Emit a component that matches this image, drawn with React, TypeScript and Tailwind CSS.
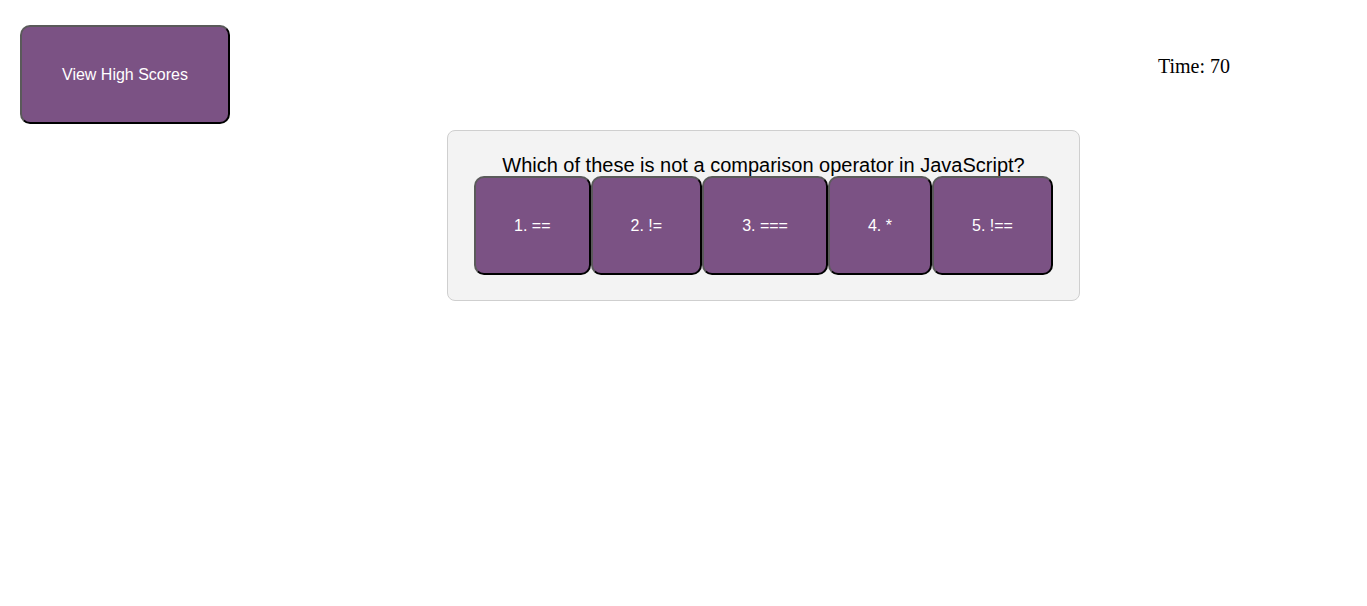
const choices = ["1. ==", "2. !=", "3. ===", "4. *", "5. !=="];

const btn =
  "rounded-[10px] border-2 border-[#5a5a5a] border-r-black border-b-black bg-[#7b5284] px-[38px] text-[16px] leading-[18px] text-white";

export default function App() {
  return (
    <div className="min-h-screen bg-white font-['Liberation_Sans',Arial,sans-serif]">
      <header className="flex items-start justify-between pl-5 pr-[137px] pt-[25px]">
        <button className={btn + " w-[210px] h-[99px] px-0"}>View High Scores</button>
        <div className="mt-[26px] font-['Liberation_Serif','Times_New_Roman',serif] text-[20px] text-black">
          Time: 70
        </div>
      </header>
      <main className="ml-[447px] mt-[6px] w-[633px] rounded-lg border border-[#cfcfcf] bg-[#f3f3f3] pb-[25px] pt-[24px]">
        <h2 className="text-center text-[20px] leading-[21px] text-black">
          Which of these is not a comparison operator in JavaScript?
        </h2>
        <div className="flex justify-center">
          {choices.map((c) => (
            <button key={c} className={btn + " h-[99px]"}>
              {c}
            </button>
          ))}
        </div>
      </main>
    </div>
  );
}
